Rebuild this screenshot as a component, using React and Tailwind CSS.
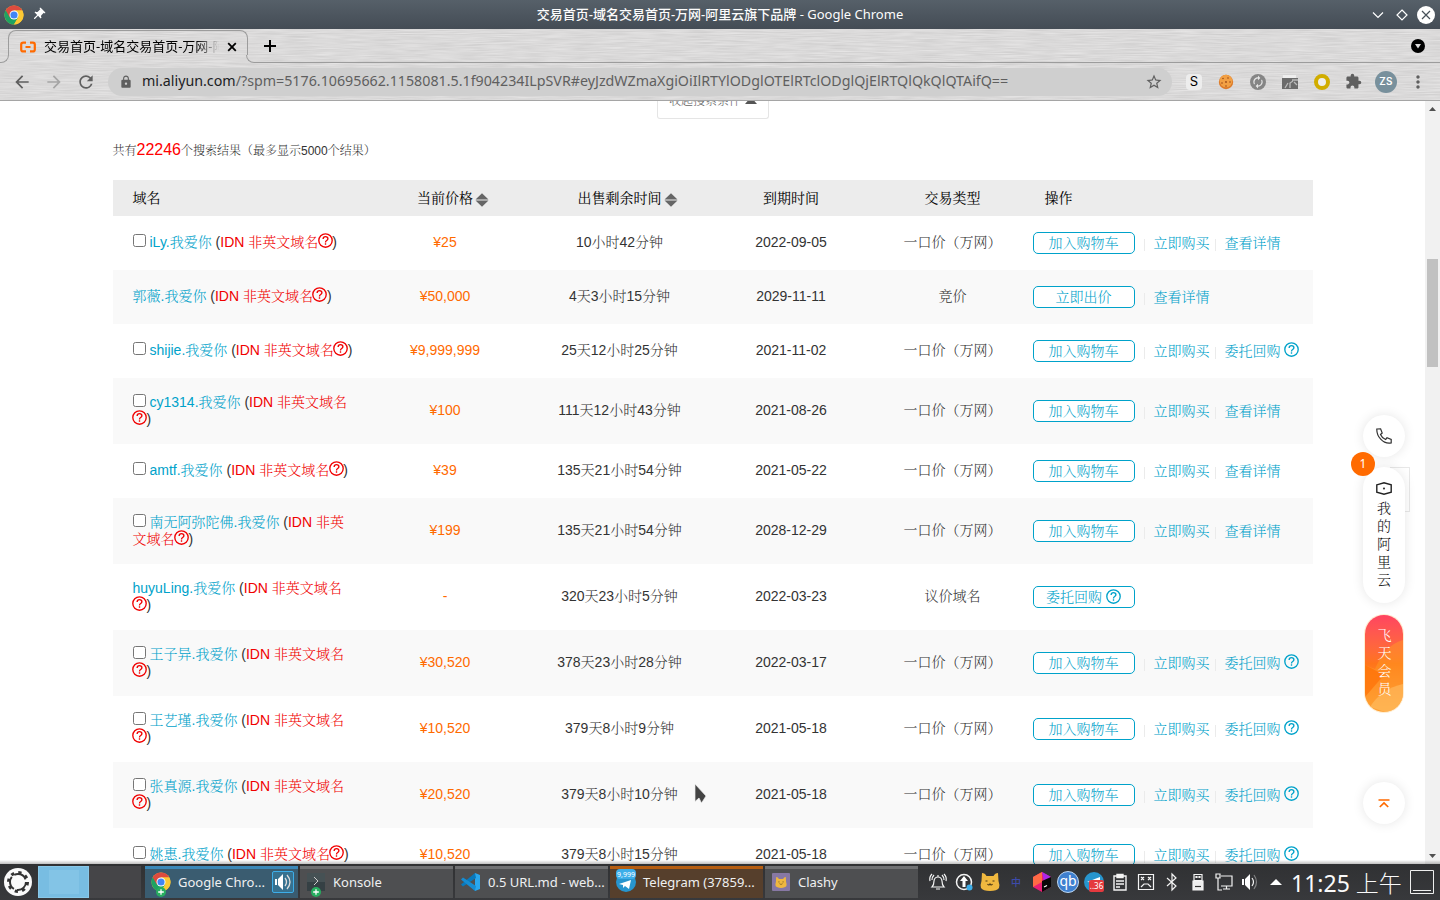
import React from "react";
import {
  MdExtension, MdLock, MdArrowBack, MdArrowForward, MdRefresh,
  MdStarBorder, MdMoreVert, MdPushPin, MdAutorenew,
} from "react-icons/md";

const ROWS = [
  { n: "iLy.我爱你", a: "IDN 非英文域名", p: "¥25", t: "10小时42分钟", d: "2022-09-05", k: "buy", c: true, h: 54 },
  { n: "郭薇.我爱你", a: "IDN 非英文域名", p: "¥50,000", t: "4天3小时15分钟", d: "2029-11-11", k: "bid", h: 54 },
  { n: "shijie.我爱你", a: "IDN 非英文域名", p: "¥9,999,999", t: "25天12小时25分钟", d: "2021-11-02", k: "back", c: true, h: 54 },
  { n: "cy1314.我爱你", a: "IDN 非英文域名", b: "", p: "¥100", t: "111天12小时43分钟", d: "2021-08-26", k: "buy", c: true, h: 66 },
  { n: "amtf.我爱你", a: "IDN 非英文域名", p: "¥39", t: "135天21小时54分钟", d: "2021-05-22", k: "buy", c: true, h: 54 },
  { n: "南无阿弥陀佛.我爱你", a: "IDN 非英", b: "文域名", p: "¥199", t: "135天21小时54分钟", d: "2028-12-29", k: "buy", c: true, h: 66 },
  { n: "huyuLing.我爱你", a: "IDN 非英文域名", b: "", p: "-", t: "320天23小时5分钟", d: "2022-03-23", k: "talk", h: 66 },
  { n: "王子异.我爱你", a: "IDN 非英文域名", b: "", p: "¥30,520", t: "378天23小时28分钟", d: "2022-03-17", k: "back", c: true, h: 66 },
  { n: "王艺瑾.我爱你", a: "IDN 非英文域名", b: "", p: "¥10,520", t: "379天8小时9分钟", d: "2021-05-18", k: "back", c: true, h: 66 },
  { n: "张真源.我爱你", a: "IDN 非英文域名", b: "", p: "¥20,520", t: "379天8小时10分钟", d: "2021-05-18", k: "back", c: true, h: 66 },
  { n: "姚惠.我爱你", a: "IDN 非英文域名", p: "¥10,520", t: "379天8小时15分钟", d: "2021-05-18", k: "back", c: true, h: 54 },
];

const GRID = "grid grid-cols-[250px_164px_184px_160px_162px_280px] items-center";
const TYPES = { bid: "竞价", talk: "议价域名" };

function ChromeLogo({ className }) {
  return (
    <svg viewBox="0 0 48 48" className={className}>
      <circle cx="24" cy="24" r="23" fill="#fcc934" />
      <path d="M24 24 L4 12.5 A23 23 0 0 0 24 47 L34 30z" fill="#1ea362" />
      <path d="M4 12.5 A23 23 0 0 1 44 13 H24 L14 30z" fill="#dd4b3e" />
      <path d="M24 47 A23 23 0 0 0 44 13 H24 L34 30z" fill="#fcc934" />
      <circle cx="24" cy="24" r="10.8" fill="#fff" />
      <circle cx="24" cy="24" r="8.6" fill="#4285f4" />
    </svg>
  );
}

function Help({ className }) {
  return (
    <svg viewBox="0 0 15 15" className={className} fill="none" stroke="currentColor" strokeWidth="1.35">
      <circle cx="7.5" cy="7.5" r="6.7" />
      <path d="M5.1 6.1Q5.1 3.6 7.5 3.6T9.9 5.8Q9.9 6.8 8.7 7.5 7.5 8.2 7.5 9.4M7.5 10.2V11.7" />
    </svg>
  );
}

function Metal() {
  return (
    <svg className="absolute inset-0 h-full w-full" preserveAspectRatio="none">
      <filter id="brushed" x="0" y="0" width="100%" height="100%" colorInterpolationFilters="sRGB">
        <feTurbulence type="fractalNoise" baseFrequency="0.035 0.9" numOctaves="2" seed="4" />
        <feColorMatrix values="0.12 0 0 0 0.797  0.12 0 0 0 0.793  0.12 0 0 0 0.793  0 0 0 0 1" />
      </filter>
      <rect width="100%" height="100%" filter="url(#brushed)" />
    </svg>
  );
}

function TitleBar() {
  return (
    <div className="flex h-[29px] items-center bg-gradient-to-b from-[#566069] to-[#444c55] text-[13px] text-[#fcfcfc]">
      <div className="flex w-[120px] items-center gap-[7px] pl-[4px]">
        <ChromeLogo className="size-5" />
        <MdPushPin className="size-[15px] rotate-45" />
      </div>
      <div className="flex-1 pt-px text-center whitespace-pre"><span className="font-medium">交易首页-域名交易首页-万网-阿里云旗下品牌</span> - Google Chrome</div>
      <div className="flex w-[120px] items-center justify-end gap-[10px] pr-[5px]">
        <svg viewBox="0 0 14 14" className="size-[14px]" fill="none" stroke="#fff" strokeWidth="1.2"><path d="M2 4.5 7 9.5 12 4.5" /></svg>
        <svg viewBox="0 0 14 14" className="size-[14px]" fill="none" stroke="#fff" strokeWidth="1.2"><path d="M7 2 12 7 7 12 2 7z" /></svg>
        <svg viewBox="0 0 18 18" className="-ml-[2px] size-[18px]"><circle cx="9" cy="9" r="9" fill="#fff" /><path d="M5 5 13 13M13 5 5 13" stroke="#475059" strokeWidth="1.2" /></svg>
      </div>
    </div>
  );
}

function BrowserBars() {
  return (
    <div className="relative h-[72px] border-b border-[#a5a5a5] bg-[#d8d8d8]">
      <Metal />
      <div className="relative flex h-[34px] items-end">
        <div className="h-2 w-[9px] rounded-br-lg border-r border-b border-[#9c9c9c]" />
        <div className="h-[34px] w-[238px]">
          <div className="-mx-px mt-px h-[25px] rounded-t-lg border-x border-t border-[#9c9c9c]">
            <div className="flex h-8 items-center pl-[11px] text-[13px] text-black">
              <svg viewBox="0 0 16 12" className="mr-2 h-3 w-4" fill="none" stroke="#ff6a00" strokeWidth="2.2"><path d="M6 1.6H3.2Q1.2 1.6 1.2 3.6V8.4Q1.2 10.4 3.2 10.4H6M10 1.6H12.8Q14.8 1.6 14.8 3.6V8.4Q14.8 10.4 12.8 10.4H10M5.5 6H10.5" /></svg>
              <span className="w-[177px] overflow-hidden whitespace-nowrap [mask-image:linear-gradient(to_right,black_86%,transparent_99%)]">交易首页-域名交易首页-万网-阿</span>
              <svg viewBox="0 0 14 14" className="ml-[4px] size-[14px] shrink-0" stroke="#000" strokeWidth="1.8"><path d="M3.2 3.2 10.8 10.8M10.8 3.2 3.2 10.8" /></svg>
            </div>
          </div>
        </div>
        <div className="-ml-px h-[34px] flex-1">
          <div className="flex h-[34px] flex-col justify-end">
            <div className="flex h-[26px] items-end justify-between pr-[15px] pl-[15px]">
              <svg viewBox="0 0 18 18" className="size-[18px]" stroke="#000" strokeWidth="2"><path d="M9 3v12M3 9h12" /></svg>
              <svg viewBox="0 0 14 14" className="mb-[2px] size-[14px]"><circle cx="7" cy="7" r="7" /><path d="M4 5h6L7 9.5z" fill="#ddd" /></svg>
            </div>
            <div className="h-2 rounded-bl-lg border-b border-l border-[#9c9c9c]" />
          </div>
        </div>
      </div>
      <div className="relative flex h-[37px] items-center text-[#5f5f5f]">
        <MdArrowBack className="ml-3 size-5" />
        <MdArrowForward className="ml-3 size-5 text-[#a5a5a5]" />
        <MdRefresh className="ml-3 size-5" />
        <div className="ml-3 flex h-7 w-[1064px] items-center rounded-full bg-[#cfcfcf] pr-[9px] pl-[11px]">
          <MdLock className="mr-[9px] size-[14px]" />
          <span className="-mt-[2px] flex-1 text-[14.25px] whitespace-nowrap"><span className="text-[#202124]">mi.aliyun.com</span>/?spm=5176.10695662.1158081.5.1f904234ILpSVR#eyJzdWZmaXgiOiIlRTYlODglOTElRTclODglQjElRTQlQkQlQTAifQ==</span>
          <MdStarBorder className="size-[18px]" />
        </div>
        <div className="ml-[14px] flex size-4 items-center justify-center rounded-sm bg-[#ededed] text-[13px] text-black [font-family:Inter,sans-serif]">S</div>
        <svg viewBox="0 0 16 16" className="ml-4 size-4"><circle cx="8" cy="8" r="7.2" fill="#dd7b2a" /><circle cx="8" cy="7" r="6.3" fill="#f2a044" /><g fill="#9b4a17"><circle cx="5" cy="4.5" r=".8" /><circle cx="10" cy="4" r=".8" /><circle cx="8" cy="8" r=".9" /><circle cx="4" cy="9" r=".8" /><circle cx="12" cy="8" r=".8" /><circle cx="8" cy="12" r=".8" /></g></svg>
        <div className="ml-4 flex size-4 items-center justify-center rounded-full bg-[#858585] text-[#e7e7e7]"><MdAutorenew className="size-[14px]" /></div>
        <svg viewBox="0 0 16 16" className="ml-4 size-4"><path d="M1 1h13v3H1z" fill="#eee" /><path d="M0 4h16v11H0z" fill="#6b6b6b" /><path d="M3 14 6 9M8 14V9l3-2M10 6h6M12 8l3 3" stroke="#bbb" strokeWidth="1.3" fill="none" /></svg>
        <div className="ml-4 size-4 rounded-full border-[4.5px] border-[#d1ad00] bg-[#eee]" />
        <MdExtension className="ml-[15px] size-[17px]" />
        <div className="ml-[13px] flex size-[22px] items-center justify-center rounded-full bg-[#78909c] text-[10px] font-semibold tracking-wide text-white [font-family:Inter,sans-serif]">ZS</div>
        <MdMoreVert className="ml-[11px] size-5" />
      </div>
    </div>
  );
}

function SortIcon() {
  return (
    <svg viewBox="0 0 14 14" className="mt-1 ml-[2px] h-[14px] w-[14px]" fill="#666"><path d="M7 .3 13.5 6.5H.5zM.5 7.5h13L7 13.7z" /></svg>
  );
}

function NameTail({ children }) {
  return (
    <>
      <span className="text-[#f00000]">{children}<Help className="inline h-[15px] w-[15px] -translate-y-[2px] align-text-bottom [margin-inline:-0.5px]" /></span>)
    </>
  );
}

function NameCell({ row }) {
  const two = row.b !== undefined;
  return (
    <div className={two ? "-mt-px pl-[19.5px] leading-[17px] whitespace-nowrap" : "pl-[19.5px] leading-[18px] whitespace-nowrap"}>
      <div className={two ? "h-[17px]" : "-mt-[2px] h-[18px]"}>
        {row.c && <span className="mr-1 inline-block size-[13px] rounded-[2.5px] border border-[#767676] bg-white" />}
        <span className="text-[#00a2ca]">{row.n}</span> (
        {two ? <span className="text-[#f00000]">{row.a}</span> : <NameTail>{row.a}</NameTail>}
      </div>
      {two && <div className="h-[17px]"><NameTail>{row.b}</NameTail></div>}
    </div>
  );
}

function Actions({ k }) {
  const label = k === "bid" ? "立即出价" : k === "talk" ? "委托回购" : "加入购物车";
  return (
    <div className="flex items-center text-[#00a2ca]">
      <span className="flex h-[22px] w-[102px] items-center justify-center rounded-[5px] border border-[#00a2ca] bg-white pr-px">
        {label}{k === "talk" && <Help className="-mt-[2px] ml-1 size-[15px]" />}
      </span>
      {k !== "talk" && (
        <>
          <span className="mt-[4px] mr-[8.5px] ml-[9px] h-3 w-px bg-[#ebebeb]" />
          <span>{k === "bid" ? "查看详情" : "立即购买"}</span>
          {k !== "bid" && (
            <>
              <span className="mt-[4px] mr-[9px] ml-[5px] h-3 w-px bg-[#ebebeb]" />
              <span>{k === "back" ? "委托回购" : "查看详情"}</span>
              {k === "back" && <Help className="-mt-[3px] ml-[3.5px] size-[15px]" />}
            </>
          )}
        </>
      )}
    </div>
  );
}

function Page() {
  return (
    <div className="flex h-[763px] bg-white">
      <div className="relative h-[763px] w-[1425px] overflow-hidden pl-[113px] text-[14px] font-light text-[#333] [font-family:'Liberation_Sans','Noto_Serif_CJK_SC','Noto_Sans_CJK_SC',sans-serif]">
        <div className="ml-[544px] flex h-[18px] w-[112px] items-end justify-center overflow-hidden rounded-b-[3px] border-x border-b border-[#e5e5e5] pb-[8px] text-[12px] leading-[18px] text-[#666]">
          <span>收起搜索条件</span>
          <svg viewBox="0 0 12 7" className="mb-[6px] ml-1 h-[7px] w-3" fill="#555"><path d="M6 0 12 7H0z" /></svg>
        </div>
        <div className="mt-[19px] -ml-[0.5px] flex h-6 items-center text-[12px] leading-6"><span className="pt-px">共有</span><span className="text-[16px] text-[#f00]">22246</span><span className="pt-px">个搜索结果（最多显示5000个结果）</span></div>
        <div className="mt-[18px] w-[1200px]">
          <div className={`${GRID} h-9 bg-[#ececec] font-normal text-black`}>
            <div className="pl-[19.5px]">域名</div>
            <div className="flex items-center justify-center pl-4">当前价格<SortIcon /></div>
            <div className="flex items-center justify-center pl-[17px]">出售剩余时间<SortIcon /></div>
            <div className="text-center">到期时间</div>
            <div className="pl-px text-center">交易类型</div>
            <div className="pl-[11.5px]">操作</div>
          </div>
          {ROWS.map((row, i) => (
            <div key={row.n} className={`${GRID} ${i % 2 ? "bg-[#f9f9f9]" : "bg-white"} ${row.h === 66 ? "h-[66px]" : "h-[54px]"}`}>
              <NameCell row={row} />
              <div className="-mt-[2px] text-center text-[#ff6a00]">{row.p}</div>
              <div className="-mt-[2px] pl-px text-center">{row.t}</div>
              <div className="-mt-[2px] text-center">{row.d}</div>
              <div className="-mt-[2px] pl-px text-center">{TYPES[row.k] || "一口价（万网）"}</div>
              <Actions k={row.k} />
            </div>
          ))}
        </div>
        <SideWidgets />
        <svg viewBox="0 0 14 22" className="absolute top-[682px] left-[694px] h-[22px] w-[14px]"><path d="M1 1V18.5L5 15 7.5 20 12 13 z" fill="#444" stroke="#eee" strokeWidth=".7" /></svg>
      </div>
      <div className="flex w-[15px] flex-col items-center bg-[#f1f1f1]">
        <svg viewBox="0 0 7 4" className="mt-[6px] h-1 w-[7px]" fill="#505050"><path d="M0 4 3.5 0 7 4z" /></svg>
        <div className="mt-[148px] h-[108px] w-[11px] bg-[#c1c1c1]" />
        <svg viewBox="0 0 7 4" className="mt-auto mb-[6px] h-1 w-[7px]" fill="#505050"><path d="M0 0 3.5 4 7 0z" /></svg>
      </div>
    </div>
  );
}

function SideWidgets() {
  return (
    <div className="absolute top-[314px] left-[1363px] flex w-[42px] flex-col items-center">
      <div className="flex size-[42px] items-center justify-center rounded-full bg-white shadow-[0_0_12px_rgba(0,0,0,0.1)]">
        <svg viewBox="0 0 16 16" className="size-4" fill="none" stroke="#333" strokeWidth="1.2"><path d="M.8 1 4.6.8 6.2 5 4.5 6.5Q6 10 9.6 11.5L11 9.8 15.2 11.4V15Q9 16 4.7 11.2.6 7 .8 1z" /></svg>
      </div>
      <div className="relative mt-[10px]">
        <div className="absolute top-0 -right-[5px] h-[45px] w-[20px] border-y border-r border-[#e8e8e8]" />
        <div className="relative flex h-[136px] w-[42px] flex-col items-center rounded-full bg-white pt-[15px] text-[14px] leading-[18px] text-[#111] shadow-[0_0_12px_rgba(0,0,0,0.1)]">
          <svg viewBox="0 0 16 13" className="mb-[4px] h-[13px] w-4 shrink-0" fill="none" stroke="#222" strokeWidth="1.4"><path d="M.8 2.8 8 .8 15.2 2.8V10.2L8 12.2.8 10.2z" /><circle cx="8" cy="6.5" r=".4" /></svg>
          {[..."我的阿里云"].map((c) => <span key={c}>{c}</span>)}
        </div>
        <span className="absolute -top-[15px] -left-[12px] flex size-6 items-center justify-center rounded-full bg-[#ff6a00] text-[12px] font-normal text-white [font-family:'Noto_Sans',sans-serif]">1</span>
      </div>
      <div className="relative mt-[12px] flex h-[97px] w-[38px] flex-col items-center overflow-hidden rounded-full bg-gradient-to-b from-[#ff4460] via-[#ff7419] to-[#ffa33f] pt-[11px] text-[14px] leading-[18px] text-white shadow-[0_0_0_1px_#ffedcf]">
        <svg viewBox="0 0 38 97" className="absolute inset-0 h-full w-full"><path d="M38 25Q20 30 10 54L0 50V97H38z" fill="#ff9f25" opacity=".45" /><path d="M38 69Q16 74 5 92L20 97H38z" fill="#ffc36c" opacity=".55" /><path d="M0 50 19 60 0 82z" fill="#ff6a00" opacity=".6" /></svg>
        {[..."飞天会员"].map((c) => <span key={c} className="relative pl-px">{c}</span>)}
      </div>
      <div className="mt-[70px] flex size-[42px] items-center justify-center rounded-full bg-white shadow-[0_0_12px_rgba(0,0,0,0.1)]">
        <svg viewBox="0 0 12 9" className="h-[9px] w-3" fill="none" stroke="#ff6a00" strokeWidth="1.7"><path d="M.5 1h11M1.8 8 6 4l4.2 4" /></svg>
      </div>
    </div>
  );
}

function Plus() {
  return <svg viewBox="0 0 10 10" className="absolute -bottom-[5px] left-[5px] size-[10px]"><circle cx="5" cy="5" r="5" fill="#27ae60" /><path d="M5 2.2v5.6M2.2 5h5.6" stroke="#fff" strokeWidth="1.3" /></svg>;
}

function Task({ tone, icon, label, children }) {
  const tones = {
    blue: "border-[#3b88b8] bg-[#3a5c70]",
    gray: "border-[#707173] bg-[#4e4f51]",
    orange: "border-[#b65d10] bg-[#563f2c]",
  };
  return (
    <div className={`flex h-8 w-[153px] items-center border-t-[3px] pl-[6px] text-[13px] text-[#eff0f1] ${tones[tone]}`}>
      <span className="relative -mt-[3px] mr-[7px] size-5 shrink-0">{icon}</span>
      <span className="-mt-[2px] whitespace-nowrap">{label}</span>
      {children}
    </div>
  );
}

const Tray = ({ children }) => (
  <svg viewBox="0 0 20 20" className="size-5 shrink-0" fill="none" stroke="#f4f4f4" strokeWidth="1.2">{children}</svg>
);

function Cat() {
  return <g stroke="none"><path d="M2 1Q5 1 6.5 4h7Q15 1 18 1L18.5 9Q20 13 19 16 17 19 10 19T1 16Q0 13 1.5 9z" fill="#f0b83f" /><path d="M5.5 9h2M12.5 9h2M7.5 12q1.5 2 2.5 0 1 2 2.5 0" stroke="#4b3817" fill="none" /></g>;
}

function Taskbar() {
  return (
    <div className="relative flex h-9 items-center bg-gradient-to-b from-[#303133] to-[#38393c]">
      <svg viewBox="0 0 28 28" className="ml-1 size-7">
        <circle cx="14" cy="14" r="14" fill="#fafafa" />
        <circle cx="14" cy="14" r="9.5" fill="none" stroke="#333" strokeWidth="3" strokeDasharray="3.2 4.26" />
        <circle cx="14" cy="14" r="8" fill="none" stroke="#333" strokeWidth="2" strokeDasharray="13.7 3.05" />
      </svg>
      <div className="ml-[6px] flex h-8 w-[103px] bg-[#454548]"><div className="w-[51px] border border-[#89c8e8] bg-[#78bde2] p-[3px]"><div className="ml-[7px] h-full w-[30px] bg-[#83c4e6]" /></div></div>
      <div className="ml-1 flex gap-[2px]">
        <Task tone="blue" label="Google Chro..." icon={<><ChromeLogo className="size-5" /><Plus /></>}>
          <span className="-mt-[3px] ml-[7px] flex size-[22px] shrink-0 items-center justify-center rounded-[2px] border border-[#3daee9] bg-[#37718f]">
            <svg viewBox="0 0 18 18" className="size-[18px]" fill="none" stroke="#ddd" strokeWidth="1.3"><path d="M1 6h2v6H1zM4 6 9 1V17L4 12z" fill="#fff" stroke="none" /><path d="M11 5q3 4 0 8M13 2q6 7 0 14" /></svg>
          </span>
        </Task>
        <Task tone="gray" label="Konsole" icon={<><svg viewBox="0 0 20 20" className="size-5"><path d="M1 1h18v18H1z" fill="#354044" /><path d="M1 1h18v9H1z" fill="#465154" /><path d="m8 5 4 4-4 4" stroke="#ccc" fill="none" /></svg><Plus /></>} />
        <Task tone="gray" label="0.5 URL.md - web..." icon={<svg viewBox="0 0 20 20" className="size-5"><path d="M14 1 19 3V17L14 19z" fill="#2aa7ee" /><path d="M14 1 0 12.5 2 14.5 15 6z" fill="#0879bd" /><path d="M14 19 0 7.5 2 5.5 15 14z" fill="#168cd2" /></svg>} />
        <Task tone="orange" label="Telegram (37859..." icon={<><svg viewBox="0 0 20 20" className="size-5"><circle cx="10" cy="10" r="10" fill="#2795ce" /><path d="m3 12 12-4-2 9-4-3-2 2v-3z" fill="#fff" /></svg><span className="absolute -top-[3px] left-0 flex h-[10px] w-[20px] items-center justify-center rounded-[4px] bg-[#3daee9] text-[7px] leading-none text-white">9,999</span></>} />
        <Task tone="gray" label="Clashy" icon={<svg viewBox="0 0 20 20" className="size-5"><rect x="1" y="1" width="18" height="18" rx="1" fill="#8778a4" /><g transform="translate(4 4.5) scale(.6)"><Cat /></g></svg>} />
      </div>
      <div className="ml-[10px] flex items-center gap-[6px]">
        <Tray><path d="M4 15h12q-2-2-2-6-.5-4-4-4T6 9q0 4-2 6zM8 17h4M10 3v2M4 2Q1 5 2 9M16 2q3 3 2 7M6 3Q4 5 4 8M14 3q2 2 2 5" /></Tray>
        <Tray><circle cx="10" cy="10" r="7.5" strokeWidth="1.5" /><path d="m10 4 4 5h-2.5v6h-3V9H6z" fill="#fff" stroke="none" /><circle cx="15.5" cy="15.5" r="3" fill="#3daee9" stroke="none" /></Tray>
        <Tray><Cat /></Tray>
        <span className="w-5 text-center text-[10px] font-medium text-[#3d4bab]">中</span>
        <Tray><g stroke="none"><path d="m10 0 9 5v10l-9 5-9-5V5z" fill="#e91e75" /><path d="M1 5 10 0v10L1 15z" fill="#ff6a45" /><path d="m10 0 9 5-7 4z" fill="#a928e8" /><path d="m10 9 9-4v10l-9 5z" fill="#080808" /><path d="m12 15 3-1.5" stroke="#fff" /></g></Tray>
        <span className="-mx-px flex size-[22px] items-center justify-center rounded-full border border-[#bdd7f3] bg-[#3f80cf] pb-[2px] text-[14px] leading-none text-white">qb</span>
        <span className="relative size-5 rounded-full bg-[#2795ce]"><svg viewBox="0 0 20 20" className="size-5"><path d="m3 10 13-5v6z" fill="#fff" /></svg><span className="absolute right-0 bottom-0 flex h-3 w-[15px] items-center justify-center rounded-[2px] bg-[#e5393e] text-[8px] text-white">..36</span></span>
        <Tray><path d="M4 4h12v14H4zM7 2.5h6v3H7zM6 9h8M6 12h8M6 15h4" strokeWidth="1.4" /></Tray>
        <Tray><path d="M2.5 2.5h15v15h-15zM5 5l3 3M8 5 5 8M12 5l3 3M15 5l-3 3M5 15l3-3h4l3 3" /></Tray>
        <Tray><path d="m5 6 9 8-4 4V2l4 4-9 8" /></Tray>
        <Tray><path d="M6 2.5h8v6H6z" /><path d="M5 9h10v9H5zM8 4.5h1v1H8zM11 4.5h1v1h-1z" fill="#eee" /><path d="M7 14.5h6" stroke="#333" /></Tray>
        <Tray><path d="M7 4h11v10H7M2 2h4v4H2zM4 6v12h4M9 17h7M12.5 14v3" /></Tray>
        <Tray><path d="M2 7h2v6H2zM5 7l5-5v16l-5-5z" fill="#fff" stroke="none" /><path d="M12 6q3 4 0 8" /><path d="M14 3q5 7 0 14" opacity=".4" /></Tray>
        <Tray><path d="m4 13 6-6 6 6z" fill="#fff" stroke="none" /></Tray>
      </div>
      <span className="ml-[5px] w-[111px] pt-[2px] text-[23px] leading-none whitespace-nowrap text-[#fafafa]">11:25 <span className="font-light">上午</span></span>
      <svg viewBox="0 0 24 24" className="ml-2 size-6" fill="none" stroke="#eee"><path d="M.5.5h23v23H.5zM3 20.5h18" /></svg>
    </div>
  );
}

export default function App() {
  return (
    <div className="relative h-[900px] w-[1440px] overflow-hidden [font-family:'Noto_Sans','Noto_Sans_CJK_SC',sans-serif]">
      <TitleBar />
      <BrowserBars />
      <Page />
      <div className="absolute bottom-9 left-0 h-1 w-full bg-gradient-to-b from-[#00000000] to-[#00000040]" />
      <Taskbar />
    </div>
  );
}
